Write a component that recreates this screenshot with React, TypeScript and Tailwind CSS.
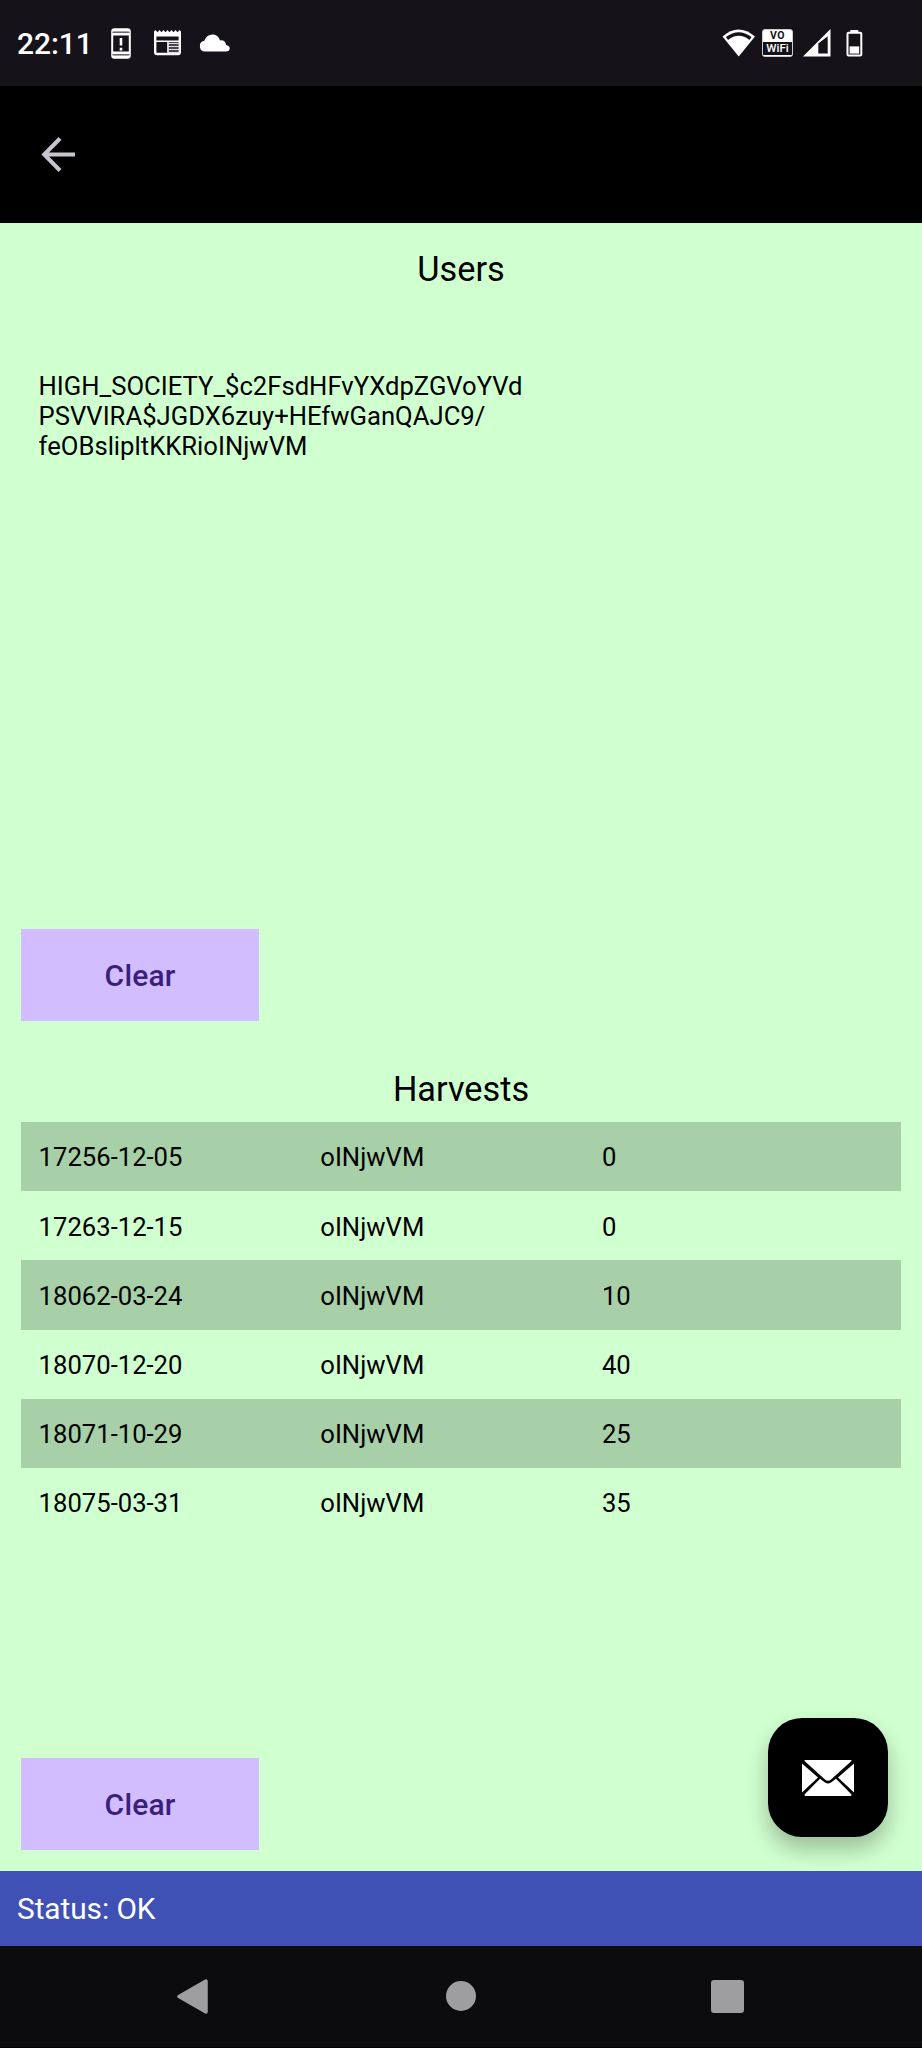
import React from "react";

const harvests = [
  { date: "17256-12-05", user: "oINjwVM", amount: 0 },
  { date: "17263-12-15", user: "oINjwVM", amount: 0 },
  { date: "18062-03-24", user: "oINjwVM", amount: 10 },
  { date: "18070-12-20", user: "oINjwVM", amount: 40 },
  { date: "18071-10-29", user: "oINjwVM", amount: 25 },
  { date: "18075-03-31", user: "oINjwVM", amount: 35 },
];

function StatusBar() {
  return (
    <div className="flex h-[86px] shrink-0 items-center bg-[#15121a] pl-[17px] text-white">
      <span className="w-[94px] pt-[2px] text-[30px] leading-none font-medium tracking-[-0.1px]">22:11</span>
      <svg className="h-[31px] w-[20px]" viewBox="0 0 20 31" fill="none">
        <rect x="1.2" y="1.2" width="17.6" height="28.6" rx="2.2" stroke="#fff" strokeWidth="2" />
        <path d="M1 4.2H19M1 26.8H19" stroke="#85838a" strokeWidth="1.2" />
        <path d="M1 2.6H19M1 28.4H19" stroke="#fff" strokeWidth="1.8" />
        <path d="M1 6.2H19M1 24.8H19" stroke="#fff" strokeWidth="2.4" />
        <path d="M10 10V17.5M10 19.8V22.4" stroke="#fff" strokeWidth="2.6" />
      </svg>
      <svg className="ml-[23px] h-[26px] w-[27px]" viewBox="0 0 27 26" fill="none">
        <path d="M0 1.5L1.5 0L3.5 2.2L5.5 0L7.5 2.2L9.5 0L11.5 2.2L13.5 0L15.5 2.2L17.5 0L19.5 2.2L21.5 0L23.5 2.2L25.5 0L27 1.5V6.6H0Z" fill="#fff" />
        <path d="M1.2 5V22.3Q1.2 24 3 24H24Q25.8 24 25.8 22.3V5" stroke="#fff" strokeWidth="2.4" />
        <path d="M1 11.2H26M14 11V24" stroke="#fff" strokeWidth="1.6" />
        <path d="M14 13.6H26M14 16.6H26M14 19.6H26M14 22.4H26" stroke="#dddde0" strokeWidth="1.5" />
      </svg>
      <svg className="ml-[18px] h-[18px] w-[31px]" viewBox="0 0 31 18">
        <path d="M6 17.5A5.4 5.4 0 0 1 5.3 6.8C7 2.5 9.8.5 13.4.5 17.5.5 20 3 21 6.4 24.7 5.8 26.8 8 27 11 29.5 11.4 30.7 12.6 30.7 14.2 30.7 16.3 29.2 17.5 27 17.5Z" fill="#fff" />
      </svg>
      <svg className="ml-[492px] h-[28px] w-[34px]" viewBox="0 0 34 28">
        <path d="M.5 7.5Q16.5 -6.5 33 7.5L16.7 27.5Z" fill="#fff" />
        <path d="M5 9.5Q16.7 .5 28.5 9.5" stroke="#15121a" strokeWidth="3.6" fill="none" />
      </svg>
      <span className="ml-[6px] flex h-[28px] w-[31px] flex-col overflow-hidden rounded-[3px] border-[1.5px] border-[#ccc] bg-white text-center">
        <b className="h-[12px] text-[10.5px] leading-[12px] tracking-[0.6px] text-[#15121a]">VO</b>
        <b className="h-[13px] bg-[#15121a] text-[11.5px] leading-[13px] font-medium">WiFi</b>
      </span>
      <svg className="ml-[10px] h-[28px] w-[28px]" viewBox="0 0 28 28">
        <path fillRule="evenodd" d="M0 27.5L27.5 0V27.5ZM15.3 14.5V24.5H24.7V7.2Z" fill="#fff" />
      </svg>
      <svg className="ml-[15px] h-[27px] w-[17px]" viewBox="0 0 17 27" fill="none">
        <rect x="4.3" y="0" width="8" height="3" fill="#fff" />
        <rect x="1.5" y="2.8" width="13.8" height="22.8" rx="1" stroke="#fff" strokeWidth="2" />
        <rect x="3.6" y="16.4" width="9.6" height="7.2" fill="#fff" />
      </svg>
    </div>
  );
}

function ClearButton() {
  return (
    <button className="h-[92px] w-[237.5px] shrink-0 bg-[#d1bdff] text-[30px] font-medium tracking-[0.2px] text-[#3b1f78]">
      Clear
    </button>
  );
}

export default function App() {
  return (
    <div className="flex h-[2048px] w-[922px] flex-col overflow-hidden bg-black font-[Roboto,sans-serif] text-black">
      <StatusBar />
      <header className="flex h-[137px] shrink-0 items-center pl-[41px]">
        <svg className="h-[36px] w-[35px]" viewBox="0 0 35 36" fill="none" stroke="#cac4d0" strokeWidth="4">
          <path d="M34 17.5H4M19 1.5L3.2 17.5L19 33.5" />
        </svg>
      </header>
      <main className="flex h-[1648.3px] shrink-0 flex-col bg-[#d0ffd0] px-[21.4px]">
        <h1 className="mt-[21px] h-[50px] text-center text-[34.3px] leading-[50px]">Users</h1>
        <section className="mt-[77px] h-[558px] pl-[17.2px] text-[25.65px] leading-[30px]">
          <p>HIGH_SOCIETY_$c2FsdHFvYXdpZGVoYVd</p>
          <p>PSVVIRA$JGDX6zuy+HEfwGanQAJC9/</p>
          <p>feOBslipltKKRioINjwVM</p>
        </section>
        <ClearButton />
        <h2 className="mt-[43px] h-[50px] text-center text-[34.3px] leading-[50px]">Harvests</h2>
        <section className="mt-[8px] flex h-[636px] flex-col text-[25.65px]">
          {harvests.map((row, i) => (
            <div
              key={row.date}
              className={`grid h-[69.2px] shrink-0 grid-cols-[281.7px_281.7px_1fr] items-center pt-[2px] pl-[17.2px] ${i % 2 === 0 ? "bg-[#a7d0a8]" : ""}`}
            >
              <span>{row.date}</span>
              <span>{row.user}</span>
              <span>{row.amount}</span>
            </div>
          ))}
        </section>
        <ClearButton />
      </main>
      <footer className="flex h-[74.7px] shrink-0 items-center bg-[#3f51b5] pt-[2px] pl-[17px] text-[29.8px] tracking-[-0.05px] text-white">
        Status: OK
      </footer>
      <nav className="flex h-[101px] shrink-0 items-center bg-[#0c0c0e] pl-[177px]">
        <svg className="h-[35px] w-[31px]" viewBox="0 0 31 35">
          <path d="M2 17.5L29 2V33Z" fill="#9e9ea0" stroke="#9e9ea0" strokeWidth="3.5" strokeLinejoin="round" />
        </svg>
        <span className="ml-[238px] size-[30px] rounded-full bg-[#9e9ea0]" />
        <span className="ml-[235px] size-[33px] rounded-[3px] bg-[#9e9ea0]" />
      </nav>
      <button
        aria-label="Send mail"
        className="absolute top-[1718px] left-[768px] flex h-[119px] w-[120px] items-center justify-center rounded-[34px] bg-black shadow-[0_12px_22px_rgba(0,0,0,0.26)]"
      >
        <svg className="h-[36px] w-[52px]" viewBox="0 0 52 36">
          <path d="M3 0H49Q50 0 49.5 1L29 19.5Q26 22 23 19.5L2.5 1Q2 0 3 0Z" fill="#fff" />
          <path d="M0 3.5L16 17.5L0 32.5ZM52 3.5L36 17.5L52 32.5Z" fill="#fff" />
          <path d="M18 18.7L23 22.6Q26 24.5 29 22.6L34 18.7L49.5 34.5Q50 36 48 36H4Q2 36 2.5 34.5Z" fill="#fff" />
        </svg>
      </button>
    </div>
  );
}
